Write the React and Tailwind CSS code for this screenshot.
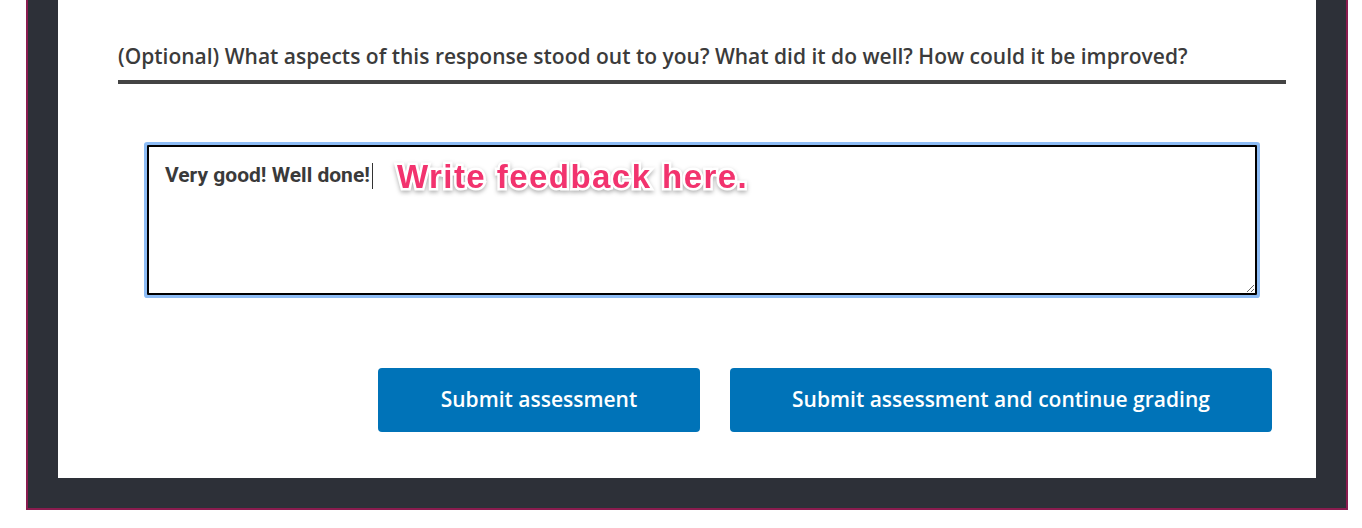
import React, { useState } from 'react';

const App = () => {
  const [feedback, setFeedback] = useState('Very good! Well done!');

  return (
    <div className="min-h-[528px] bg-white pl-[26px]">
      {/* assessment frame */}
      <div className="w-[1322px] border-x-2 border-b-2 border-[#8a1c4f] bg-[#2d3038] px-[30px] pb-[30px]">
        <div className="h-[478px] bg-white pl-[60px] pr-[30px] pt-[42px]">
          <label
            htmlFor="feedback"
            className="block text-[21px] font-semibold leading-[28px] text-[#3b3b3b] [font-family:'Open_Sans',sans-serif]"
          >
            (Optional) What aspects of this response stood out to you? What did it do well? How could it be improved?
          </label>
          <div className="mt-[10px] h-[4px] w-[1168px] bg-[#444444]" />

          <div className="relative ml-[29px] mt-[61px] w-[1110px]">
            <textarea
              id="feedback"
              value={feedback}
              onChange={(e) => setFeedback(e.target.value)}
              className="block h-[150px] w-[1110px] rounded-[1px] border-2 border-black px-[16px] pt-[14px] text-[21px] font-bold leading-[28px] text-[#3a3a3a] outline-none shadow-[0_0_0_3px_#8dbcf5] [font-family:Roboto,sans-serif]"
            />
            {/* caret */}
            <div className="absolute left-[225px] top-[18px] h-[26px] w-px bg-[#333333]" />
            {/* annotation */}
            <div className="pointer-events-none absolute left-[250px] top-[12px] text-[33px] font-bold leading-[40px] tracking-[1.45px] text-[#f2336e] [font-family:'Liberation_Sans',Arial,sans-serif] [-webkit-text-stroke:5px_white] [paint-order:stroke_fill] [filter:drop-shadow(0_2px_2px_rgba(0,0,0,0.3))]">
              Write feedback here.
            </div>
          </div>

          <div className="mt-[73px] flex justify-end gap-[30px] pr-[14px]">
            <button className="h-[64px] w-[322px] rounded-[4px] bg-[#0073b8] text-[21px] font-semibold text-white [font-family:'Open_Sans',sans-serif]">
              Submit assessment
            </button>
            <button className="h-[64px] w-[542px] rounded-[4px] bg-[#0073b8] text-[21px] font-semibold text-white [font-family:'Open_Sans',sans-serif]">
              Submit assessment and continue grading
            </button>
          </div>
        </div>
      </div>
    </div>
  );
};

export default App;
